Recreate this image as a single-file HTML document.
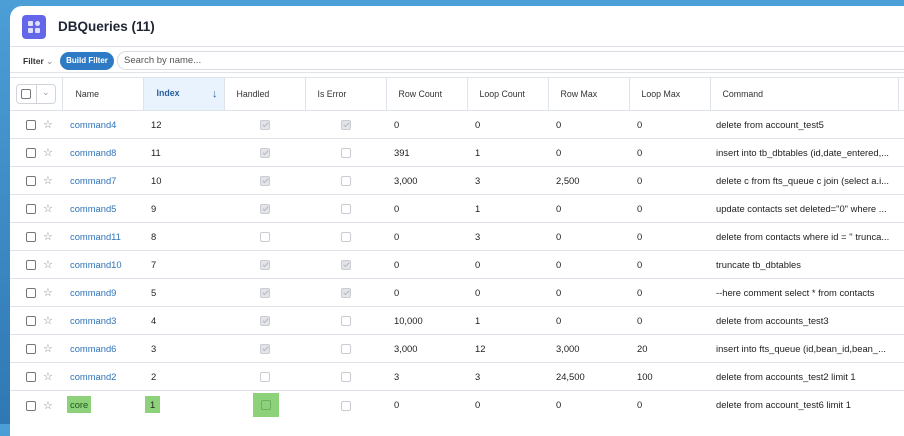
<!DOCTYPE html><html><head><style>
*{box-sizing:border-box;margin:0;padding:0}
body{width:904px;height:424px;overflow:hidden;background:linear-gradient(180deg,#4c9ed6,#2f78b4);font-family:"Liberation Sans",sans-serif;position:relative}
.panel{position:absolute;left:10px;top:6px;width:900px;height:430px;background:#fff;border-top-left-radius:12px}
.ico{position:absolute;left:22px;top:15px;width:24px;height:24px;background:#6466e9;border-radius:4px}
.ico i{position:absolute;width:5px;height:5px;background:#dfe0ff;border-radius:1px}
.title{position:absolute;left:58px;top:19px;font-size:13.5px;font-weight:bold;color:#1f2533}
.filter{position:absolute;left:23px;top:56px;font-size:8.5px;font-weight:bold;color:#333}
.bf{position:absolute;left:60px;top:52px;width:54px;height:18px;background:#2f7ac5;color:#fff;border-radius:9px;font-size:8px;font-weight:bold;text-align:center;line-height:18px}
.search{position:absolute;left:117px;top:51px;width:800px;height:19px;border:1px solid #d8dce3;border-radius:9px;font-size:9.5px;color:#555;padding-left:6px;line-height:17px}
.hl{position:absolute;left:10px;width:900px;height:1px;background:#dfe3ea}
table{position:absolute;left:10px;top:77px;width:908px;border-collapse:collapse;font-size:9.4px;color:#222;table-layout:fixed}
td,th{height:28px;border-bottom:1px solid #dfe3ea;text-align:left;font-weight:normal;padding-left:8px;white-space:nowrap;overflow:hidden}
th{height:33px;border-left:1px solid #dfe3ea;font-size:8.8px;color:#333;border-top:1px solid #dfe3ea}
th.sel{background:#e8f3fd;color:#2a5fa0;font-weight:bold}
a{color:#2e73b8;text-decoration:none}
.cb{display:inline-block;width:10px;height:10px;border:1px solid #c9cdd3;border-radius:2px;vertical-align:middle;background:#fff}
.cb.on{background:#e2e4e8;position:relative}
.cb.on:after{content:"";position:absolute;left:3px;top:0px;width:2px;height:5px;border:solid #b4b8bd;border-width:0 1.5px 1.5px 0;transform:rotate(45deg)}
.rc{display:inline-block;width:10px;height:10px;border:1px solid #777;border-radius:2px;vertical-align:middle}
.st{display:inline-block;color:#888;font-size:11px;margin-left:7px;vertical-align:middle;line-height:10px}
.g{background:#8dd17a;padding:3px 3px}
</style></head><body>
<div class="panel"></div>
<div class="ico"><i style="left:6px;top:6px"></i><i style="left:13px;top:6px;border-radius:3px"></i><i style="left:6px;top:13px"></i><i style="left:13px;top:13px"></i></div>
<div class="title">DBQueries (11)</div>
<div class="filter">Filter <span style="font-weight:normal;color:#888">&#8964;</span></div>
<div class="bf">Build Filter</div>
<div class="search">Search by name...</div>
<div class="hl" style="top:46px"></div>
<div class="hl" style="top:72px"></div>
<table>
<colgroup><col style="width:52px"><col style="width:81px"><col style="width:81px"><col style="width:81px"><col style="width:81px"><col style="width:81px"><col style="width:81px"><col style="width:81px"><col style="width:81px"><col style="width:188px"><col style="width:20px"></colgroup>
<tr><th style="border-left:none;padding-left:6px"><span style="display:inline-block;width:40px;height:20px;border:1px solid #d0d4da;border-radius:4px;position:relative;vertical-align:middle"><span class="rc" style="position:absolute;left:4px;top:4px"></span><span style="position:absolute;left:19px;top:0;height:18px;border-left:1px solid #d0d4da"></span><span style="position:absolute;left:25px;top:2px;color:#999;font-size:9px">&#8964;</span></span></th><th style="padding-left:13px">Name</th><th class="sel" style="padding-left:13px">Index<span style="float:right;margin-right:6px;font-size:11px">&#8595;</span></th><th style="padding-left:12px">Handled</th><th style="padding-left:12px">Is Error</th><th style="padding-left:12px">Row Count</th><th style="padding-left:12px">Loop Count</th><th style="padding-left:12px">Row Max</th><th style="padding-left:12px">Loop Max</th><th style="padding-left:12px">Command</th><th></th></tr>
<tbody>
<tr><td style="padding-left:16px"><span class="rc"></span><span class="st">☆</span></td><td><a>command4</a></td><td>12</td><td style="padding-left:36px"><span class="cb on"></span></td><td style="padding-left:36px"><span class="cb on"></span></td><td>0</td><td>0</td><td>0</td><td>0</td><td style="padding-left:6px">delete from account_test5</td><td></td></tr>
<tr><td style="padding-left:16px"><span class="rc"></span><span class="st">☆</span></td><td><a>command8</a></td><td>11</td><td style="padding-left:36px"><span class="cb on"></span></td><td style="padding-left:36px"><span class="cb"></span></td><td>391</td><td>1</td><td>0</td><td>0</td><td style="padding-left:6px">insert into tb_dbtables (id,date_entered,...</td><td></td></tr>
<tr><td style="padding-left:16px"><span class="rc"></span><span class="st">☆</span></td><td><a>command7</a></td><td>10</td><td style="padding-left:36px"><span class="cb on"></span></td><td style="padding-left:36px"><span class="cb"></span></td><td>3,000</td><td>3</td><td>2,500</td><td>0</td><td style="padding-left:6px">delete c from fts_queue c join (select a.i...</td><td></td></tr>
<tr><td style="padding-left:16px"><span class="rc"></span><span class="st">☆</span></td><td><a>command5</a></td><td>9</td><td style="padding-left:36px"><span class="cb on"></span></td><td style="padding-left:36px"><span class="cb"></span></td><td>0</td><td>1</td><td>0</td><td>0</td><td style="padding-left:6px">update contacts set deleted="0" where ...</td><td></td></tr>
<tr><td style="padding-left:16px"><span class="rc"></span><span class="st">☆</span></td><td><a>command11</a></td><td>8</td><td style="padding-left:36px"><span class="cb"></span></td><td style="padding-left:36px"><span class="cb"></span></td><td>0</td><td>3</td><td>0</td><td>0</td><td style="padding-left:6px">delete from contacts where id = '' trunca...</td><td></td></tr>
<tr><td style="padding-left:16px"><span class="rc"></span><span class="st">☆</span></td><td><a>command10</a></td><td>7</td><td style="padding-left:36px"><span class="cb on"></span></td><td style="padding-left:36px"><span class="cb on"></span></td><td>0</td><td>0</td><td>0</td><td>0</td><td style="padding-left:6px">truncate tb_dbtables</td><td></td></tr>
<tr><td style="padding-left:16px"><span class="rc"></span><span class="st">☆</span></td><td><a>command9</a></td><td>5</td><td style="padding-left:36px"><span class="cb on"></span></td><td style="padding-left:36px"><span class="cb on"></span></td><td>0</td><td>0</td><td>0</td><td>0</td><td style="padding-left:6px">--here comment select * from contacts</td><td></td></tr>
<tr><td style="padding-left:16px"><span class="rc"></span><span class="st">☆</span></td><td><a>command3</a></td><td>4</td><td style="padding-left:36px"><span class="cb on"></span></td><td style="padding-left:36px"><span class="cb"></span></td><td>10,000</td><td>1</td><td>0</td><td>0</td><td style="padding-left:6px">delete from accounts_test3</td><td></td></tr>
<tr><td style="padding-left:16px"><span class="rc"></span><span class="st">☆</span></td><td><a>command6</a></td><td>3</td><td style="padding-left:36px"><span class="cb on"></span></td><td style="padding-left:36px"><span class="cb"></span></td><td>3,000</td><td>12</td><td>3,000</td><td>20</td><td style="padding-left:6px">insert into fts_queue (id,bean_id,bean_...</td><td></td></tr>
<tr><td style="padding-left:16px"><span class="rc"></span><span class="st">☆</span></td><td><a>command2</a></td><td>2</td><td style="padding-left:36px"><span class="cb"></span></td><td style="padding-left:36px"><span class="cb"></span></td><td>3</td><td>3</td><td>24,500</td><td>100</td><td style="padding-left:6px">delete from accounts_test2 limit 1</td><td></td></tr>
<tr><td style="padding-left:16px;border:none"><span class="rc"></span><span class="st">☆</span></td><td style="padding-left:5px;border:none"><span class="g" style="color:#1d5a1d">core</span></td><td style="padding-left:2px;border:none"><span class="g" style="padding:3px 5px">1</span></td><td style="padding-left:29px;border:none"><span style="display:inline-block;background:#8dd17a;padding:7px 8px;vertical-align:middle"><span class="cb" style="background:#8dd17a;border-color:#6fae5e;display:block"></span></span></td><td style="padding-left:36px;border:none"><span class="cb"></span></td><td style="border:none">0</td><td style="border:none">0</td><td style="border:none">0</td><td style="border:none">0</td><td style="border:none;padding-left:6px">delete from account_test6 limit 1</td><td style="border:none"></td></tr>
</tbody></table>
</body></html>
